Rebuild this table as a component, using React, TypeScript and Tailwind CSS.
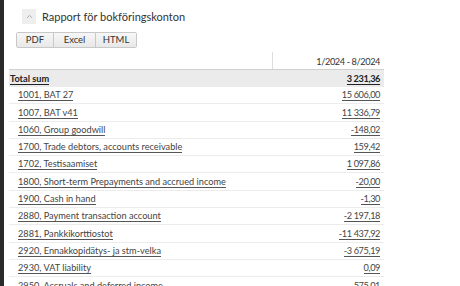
import { ChevronUp } from 'lucide-react';

type Row = { account: string; amount: string };

const ROWS: Row[] = [
  { account: '1001, BAT 27', amount: '15 606,00' },
  { account: '1007, BAT v41', amount: '11 336,79' },
  { account: '1060, Group goodwill', amount: '-148,02' },
  { account: '1700, Trade debtors, accounts receivable', amount: '159,42' },
  { account: '1702, Testisaamiset', amount: '1 097,86' },
  { account: '1800, Short-term Prepayments and accrued income', amount: '-20,00' },
  { account: '1900, Cash in hand', amount: '-1,30' },
  { account: '2880, Payment transaction account', amount: '-2 197,18' },
  { account: '2881, Pankkikorttiostot', amount: '-11 437,92' },
  { account: '2920, Ennakkopidätys- ja stm-velka', amount: '-3 675,19' },
  { account: '2930, VAT liability', amount: '0,09' },
  { account: '2950, Accruals and deferred income', amount: '-575,01' },
];

const FORMATS = ['PDF', 'Excel', 'HTML'];

export default function App() {
  return (
    <div
      className="flex h-[286px] overflow-hidden bg-white text-[#333]"
      style={{ fontFamily: 'Lato, "Open Sans", sans-serif' }}
    >
      {/* dark edge of the side panel */}
      <div className="w-[4px] shrink-0 bg-[#2a2a2a]" />

      <div className="flex-1 pl-[5px] pt-[9px]">
        <div className="flex items-center gap-[6px] pl-[13px]">
          <button
            type="button"
            className="flex h-[15px] w-[14px] items-center justify-center bg-[#eeeeee] text-[#999]"
          >
            <ChevronUp size={9} strokeWidth={2} />
          </button>
          <h1 className="text-[11px] leading-[15px] text-[#333]">
            Rapport för bokföringskonton
          </h1>
        </div>

        {/* export buttons */}
        <div className="mt-[8px] ml-[7px] flex w-fit overflow-hidden rounded-[2px] border border-[#c8c8c8] text-[9.5px] leading-[14px] text-[#333]">
          {FORMATS.map((f, i) => (
            <button
              key={f}
              type="button"
              className={[
                'bg-gradient-to-b from-[#f7f7f7] to-[#e8e8e8] text-center',
                f === 'PDF' ? 'w-[36px]' : f === 'Excel' ? 'w-[42px]' : 'w-[41px]',
                i > 0 ? 'border-l border-[#c8c8c8]' : '',
              ].join(' ')}
            >
              {f}
            </button>
          ))}
        </div>

        <div className="mt-[4px] w-[375px] text-[9.2px]">
          {/* column header */}
          <div className="flex h-[17px] items-center">
            <div className="flex-1" />
            <div className="flex h-full w-[112px] items-center justify-end border-l border-[#ddd] pr-[4px] pt-[2px] tracking-[-0.4px] text-[#333]">
              1/2024 - 8/2024
            </div>
          </div>

          {/* total */}
          <div className="flex h-[18px] items-center border-t border-[#d0d0d0] bg-[#ebebeb] font-bold text-[#222]">
            <div className="flex-1 pl-[1px]">
              <span className="border-b border-[#222]">Total sum</span>
            </div>
            <div className="w-[112px] pr-[4px] text-right tracking-[-0.4px]">
              <span className="border-b border-[#222]">3 231,36</span>
            </div>
          </div>

          {ROWS.map((r) => (
            <div
              key={r.account}
              className="flex h-[17.3px] items-center border-b border-[#ececec] text-[#444]"
            >
              <div className="flex-1 truncate pl-[9px]">
                <span className="border-b border-[#555]">{r.account}</span>
              </div>
              <div className="w-[112px] pr-[4px] text-right tracking-[-0.4px]">
                <span className="border-b border-[#555]">{r.amount}</span>
              </div>
            </div>
          ))}
        </div>
      </div>
    </div>
  );
}
